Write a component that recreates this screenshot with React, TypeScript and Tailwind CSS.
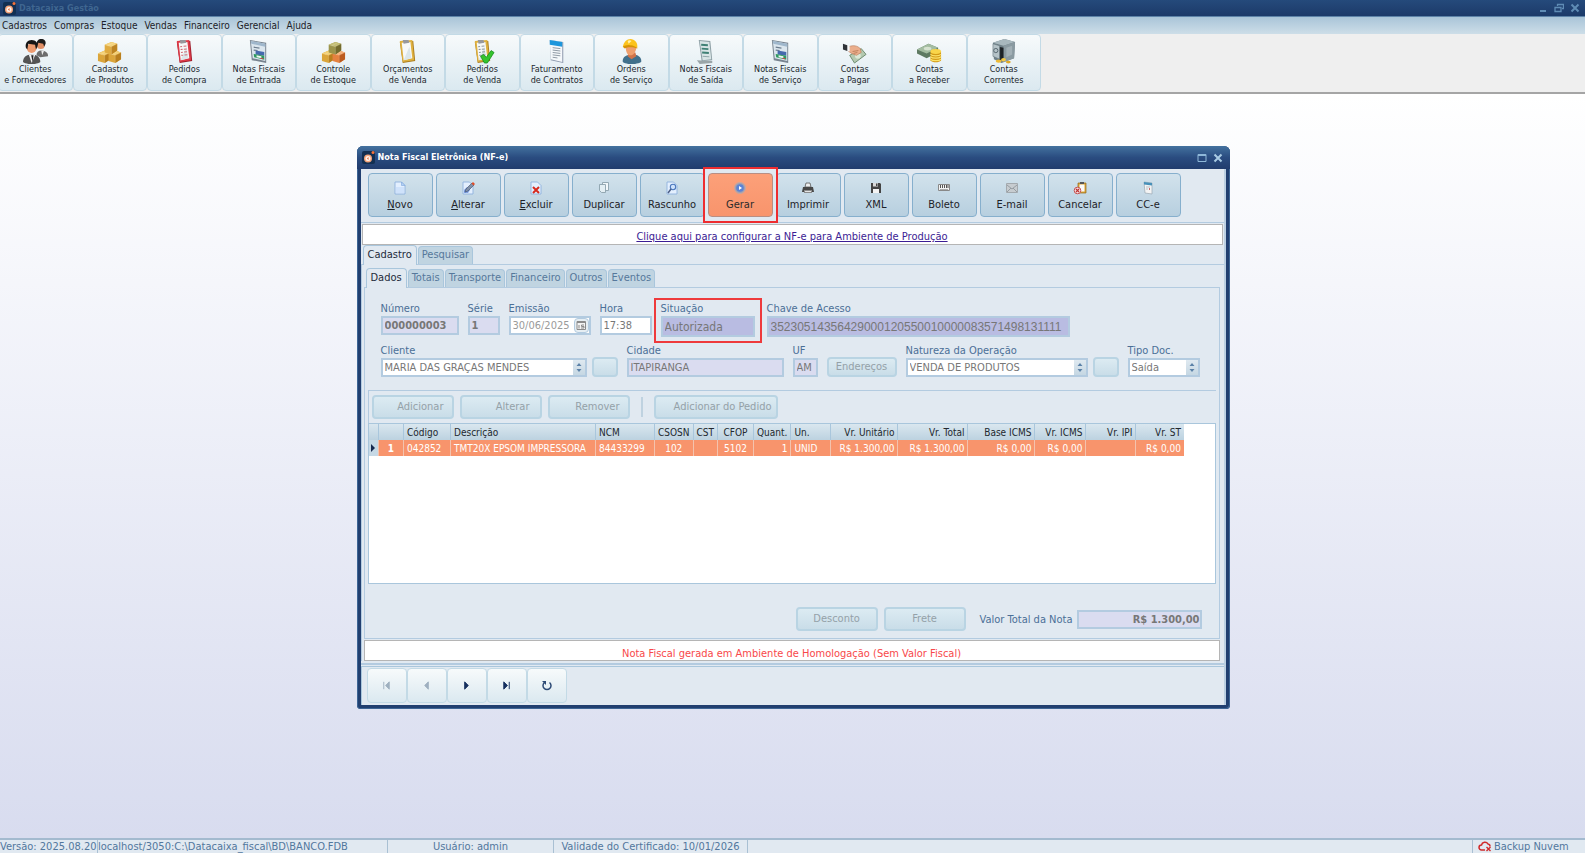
import React from "react";

const FONT = "font-['DejaVu_Sans_Condensed','DejaVu_Sans',sans-serif]";

/* ---------- main toolbar icons ---------- */

function Svg26({ children }: { children: React.ReactNode }) {
  return (
    <svg width="25" height="25" viewBox="0 0 26 26" aria-hidden="true">
      {children}
    </svg>
  );
}

function PeopleIcon() {
  return (
    <Svg26>
      <path d="M14 17c0-3 2-5 5-5s7 2 7 5v1l-8 1z" fill="#6d6d6d" />
      <path d="M19 12l1 5 2-5z" fill="#eee" />
      <circle cx="18.500" cy="6.500" r="4" fill="#e08f66" />
      <path d="M14 6c0-4 2-6 5-6 3 0 5 2 4.500 5L22 8l-1-3-5-1-1 3z" fill="#1d1d1d" />
      <path d="M0 24c0-5 3-8 9-8s9 3 9 8c-4 3-14 3-18 0z" fill="#555" />
      <path d="M6 16l3 9 4-9z" fill="#f4f4f4" />
      <path d="M8.500 17l1.500 7 1-7z" fill="#222" />
      <circle cx="9" cy="9.500" r="5" fill="#ec9b70" />
      <path d="M3 9c-1-5 2-8 6-8s7 3 6 7l-1.500 3-1-5-7-1L4.500 11z" fill="#161616" />
    </Svg26>
  );
}

function Box({ x, y, top, left, right }: { x: number; y: number; top: string; left: string; right: string }) {
  return (
    <g transform={`translate(${x} ${y})`}>
      <path d="M0 3l7-3 6 2v7l-6 4-7-2z" fill={left} />
      <path d="M0 3l7-3 6 2-6 3z" fill={top} />
      <path d="M7 5l6-3v7l-6 4z" fill={right} />
      <path d="M3 4l6-3M0 3l7 2v8M7 5l6-3" stroke="#fff3" fill="none" strokeWidth="0.8" />
    </g>
  );
}

function BoxesIcon({ mixed }: { mixed?: boolean }) {
  return (
    <Svg26>
      <Box x={1} y={12} top="#f3cf73" left="#dba53a" right="#b97f1d" />
      <Box
        x={12}
        y={12}
        top={mixed ? "#f5b07a" : "#f3cf73"}
        left={mixed ? "#e4813f" : "#dba53a"}
        right={mixed ? "#bc5b1e" : "#b97f1d"}
      />
      <Box
        x={8}
        y={3}
        top={mixed ? "#c3bd73" : "#f5d47c"}
        left={mixed ? "#9c944a" : "#e0ab40"}
        right={mixed ? "#736b2c" : "#bd8422"}
      />
    </Svg26>
  );
}

function ClipboardIcon({ frame, edge, lines, check }: { frame: string; edge: string; lines?: string; check?: boolean }) {
  return (
    <Svg26>
      <path d="M5 3l14-1 2 21-13 2z" fill={edge} />
      <path d="M5 2l13-1 2 21-12 2z" fill={frame} />
      <path d="M7 4l9-1 2 17-9 2z" fill="#f6f8f8" />
      <path d="M15 8l2 12-8 2z" fill="#dbe6ea" />
      <path d="M8 1h6l1 3-6 1z" fill="#98989c" />
      {lines && (
        <g stroke={lines} strokeWidth="1.100" fill="none">
          <path d="M8.500 8l2-.2M12 7.600l3-.3M9 11l2-.2M12.300 10.600l3-.3M9.300 14l2-.2M12.600 13.600l3-.3M9.600 17l2-.2M13 16.600l3-.3" />
        </g>
      )}
      {check && <path d="M11 18l3-2 3 3 5-7 3 2-7 11h-3z" fill="#35c42e" stroke="#16891a" strokeWidth="0.8" />}
    </Svg26>
  );
}

function InvoiceIcon() {
  return (
    <Svg26>
      <path d="M4 1l17 3v21L6 22z" fill="#77838f" />
      <path d="M5 2l15 3v18L7 20z" fill="#dbe6ee" />
      <path d="M5 2l15 3v3L5.500 5z" fill="#9fb7cc" />
      <path d="M8 8.500l6 1M8 11.500l4 .500" stroke="#6b7c8d" strokeWidth="1.200" />
      <path d="M10 12l9 1.500v4l-9-1.500z" fill="#4569ad" />
      <path d="M8 15.500l11 2v4L8.500 19z" fill="#2f9960" />
      <path d="M11 17l5 1v2l-5-1z" fill="#eef5f0" />
      <path d="M15 19.500l3 .500v1l-3-.500z" fill="#cc4444" />
    </Svg26>
  );
}

function ContractIcon() {
  return (
    <Svg26>
      <path d="M6 1l14 2v22L7 22z" fill="#8c99ad" />
      <path d="M6 1l13 2v21L7 21z" fill="#f5f8fb" />
      <path d="M6 1l13 2v5L6 6z" fill="#1d96dc" />
      <path d="M9 9l8 1M9 11.500l8 1M9 14l8 1M9 16.500l8 1M9 19l5 .7" stroke="#8d97a2" strokeWidth="1" />
    </Svg26>
  );
}

function WorkerIcon() {
  return (
    <Svg26>
      <path d="M4 24c-1-5 3-8 10-8s10 4 9 8c-5 3-15 3-19 0z" fill="#41708c" />
      <path d="M10 14h7l1 4-5 3-4-3z" fill="#d1744a" />
      <path d="M7 8c0 6 2 9 5 9s6-4 6-9z" fill="#ef9f6d" />
      <path d="M4 8c1-5 4-8 8-8s8 4 7 9l-7-2-6 2z" fill="#fbc31d" />
      <path d="M4 8c3-2 8-3 15 1v1c-5-2-10-2-13 0z" fill="#d79306" />
      <path d="M9 2c1-1 3-1 4 0l-3 3z" fill="#fff0a8" />
    </Svg26>
  );
}

function ReceiptIcon() {
  return (
    <Svg26>
      <path d="M4 22l16 1v2l-13 1z" fill="#9aa5a8" />
      <path d="M6 1l12 1 2 20-11 1z" fill="#8b9da3" />
      <path d="M7 2l10 1 2 18-9 1z" fill="#d8e5e6" />
      <path d="M8.500 6l7 .5M9 10l7 .5M9.500 14l7 .5" stroke="#3f8075" strokeWidth="2" />
      <path d="M10 18l7 .5" stroke="#8fa5a8" strokeWidth="1" />
    </Svg26>
  );
}

function PayIcon() {
  return (
    <Svg26>
      <path d="M8 17l12-7 5 6-12 9z" fill="#b4c9b0" stroke="#6d8b70" />
      <circle cx="16.500" cy="17.500" r="3" fill="#dce8d6" />
      <path d="M7 8c5-2 9-1 12 2l1 4-5 3-5-2-3-2z" fill="#ebae8c" stroke="#b27350" strokeWidth="0.6" />
      <path d="M11 13l6-1M12 15l4-1" stroke="#b27350" strokeWidth="0.8" />
      <path d="M5 6.500l3 1v5.500l-3-1z" fill="#f7f7f7" />
      <path d="M1 5l4.500 1.500v6L1 11z" fill="#2f3338" />
    </Svg26>
  );
}

function ReceiveIcon() {
  return (
    <Svg26>
      <path d="M0 11l12-6 10 4v5l-12 6-10-5z" fill="#5e7a62" />
      <path d="M0 11l12-6 10 4-12 6z" fill="#a3bca0" />
      <ellipse cx="11" cy="10" rx="4" ry="2" fill="#d5e2cf" />
      <path d="M14 13h11v9c-2 3-9 3-11 0z" fill="#d39a16" />
      <path d="M14 16c2 2 9 2 11 0M14 18.500c2 2 9 2 11 0M14 21c2 2 9 2 11 0" stroke="#fbe26b" fill="none" strokeWidth="1.300" />
      <ellipse cx="19.500" cy="13" rx="5.500" ry="2.500" fill="#f9d54a" />
    </Svg26>
  );
}

function SafeIcon() {
  return (
    <Svg26>
      <path d="M2 4l12-4 11 3-1 17-13 5-8-4z" fill="#6f8088" />
      <path d="M2 4l12-4 11 3-12 4z" fill="#a8b8be" />
      <path d="M13 7l12-4-1 17-11 4z" fill="#8a9aa1" />
      <path d="M16 9l6-2v9l-6 3z" fill="#a2b0b6" />
      <path d="M8 8l5 1v14l-5-2z" fill="#1d2226" />
      <path d="M2 5l7 2v14l-7-3z" fill="#b5c3c8" stroke="#66767e" strokeWidth="0.6" />
      <circle cx="5" cy="12" r="2.200" fill="none" stroke="#56666e" />
      <ellipse cx="8" cy="23" rx="3" ry="1.800" fill="#edba35" />
      <ellipse cx="13" cy="21.500" rx="2.500" ry="1.800" fill="#f4c944" />
      <ellipse cx="18" cy="24" rx="2.500" ry="1.500" fill="#e0a824" />
    </Svg26>
  );
}

/* ---------- window toolbar icons ---------- */

function Svg14({ children }: { children: React.ReactNode }) {
  return (
    <svg width="14" height="14" viewBox="0 0 14 14" aria-hidden="true">
      {children}
    </svg>
  );
}

const Page = () => <path d="M2 1h6.500L12 4.500V13H2z" fill="#e3effe" stroke="#8fb1de" strokeWidth="0.900" />;

const NewIcon = () => (
  <Svg14>
    <Page />
    <path d="M3 6l8 0v6H3z" fill="#cfe2fb" />
    <path d="M8.500 1v3.500H12z" fill="#b5d1f5" stroke="#7ea6dc" strokeWidth="0.600" />
  </Svg14>
);
const EditIcon = () => (
  <Svg14>
    <Page />
    <path d="M3 9l3-3 3 3-2 3H3z" fill="#7e9fe0" />
    <path d="M4 11l1-3 6-6 2 2-6 6z" fill="#8292a9" stroke="#3c4966" strokeWidth="0.600" />
    <path d="M10.500 2.500L12 1l2 2-1.500 1.500z" fill="#e14b26" />
  </Svg14>
);
const DeleteIcon = () => (
  <Svg14>
    <Page />
    <path d="M4 6l6 6M10 6l-6 6" stroke="#d72a1e" strokeWidth="2" />
  </Svg14>
);
const CopyIcon = () => (
  <Svg14>
    <path d="M5.500 1.500h6v8h-6z" fill="#f1f7fa" stroke="#8ba0ab" strokeWidth="0.900" />
    <path d="M2.500 3.500h6v8H4.500l-2-2z" fill="#e3eef3" stroke="#8ba0ab" strokeWidth="0.900" />
  </Svg14>
);
const DraftIcon = () => (
  <Svg14>
    <Page />
    <circle cx="8" cy="6" r="2.700" fill="#cfe2fb" stroke="#4c78bd" strokeWidth="1.100" />
    <path d="M6 8l-3 4" stroke="#4c5f87" strokeWidth="1.500" />
  </Svg14>
);
const RunIcon = () => (
  <Svg14>
    <circle cx="7" cy="7" r="5.500" fill="#9b9fb3" stroke="#c9a7a0" />
    <circle cx="7" cy="7" r="3.800" fill="#5b83d6" />
    <path d="M6 5l3 2-3 2z" fill="#fff" />
  </Svg14>
);
const PrintIcon = () => (
  <Svg14>
    <path d="M4 6l1-4h4l1 4z" fill="#efefef" stroke="#555" strokeWidth="0.800" />
    <path d="M2 6h10l1 5H1z" fill="#474747" />
    <path d="M3 9h8v3H3z" fill="#8d8d8d" />
    <path d="M4 10h6v1H4z" fill="#e4e4e4" />
  </Svg14>
);
const SaveIcon = () => (
  <Svg14>
    <path d="M2 2h9l1 1v9H2z" fill="#444" />
    <path d="M4 2h5v3.500H4z" fill="#d9d9d9" />
    <path d="M7 2.500h1.500V5H7z" fill="#444" />
    <path d="M4 8h6v4H4z" fill="#f3f3f3" />
  </Svg14>
);
const BarcodeIcon = () => (
  <Svg14>
    <path d="M1.500 3.500h11v6h-11z" fill="#f3f3f3" stroke="#888" />
    <path d="M3.500 4v3M5.500 4v3M7.500 4v3M9.500 4v3M11 4v3" stroke="#555" strokeWidth="1" />
    <path d="M3 8.500h8" stroke="#aaa" />
  </Svg14>
);
const MailIcon = () => (
  <Svg14>
    <path d="M1.500 2.500h11v9h-11z" fill="#c7ccd0" stroke="#a3a9ae" />
    <path d="M2 4l5 4 5-4M2 11l4-4M12 11L8 7" fill="none" stroke="#90979d" strokeWidth="0.900" />
  </Svg14>
);
const CancelIcon = () => (
  <Svg14>
    <path d="M5 2h8v10H5z" fill="#d9a437" stroke="#94681b" strokeWidth="0.700" />
    <path d="M6.500 3.500h5v7h-5z" fill="#fafafa" />
    <path d="M7 1h4v2H7z" fill="#555" />
    <circle cx="4.500" cy="9.500" r="3.300" fill="#f5dada" stroke="#c65353" />
    <path d="M3 8l3 3M6 8l-3 3" stroke="#b33" strokeWidth="1.100" />
  </Svg14>
);
const LetterIcon = () => (
  <Svg14>
    <path d="M3 1l8 1v11l-7-1z" fill="#f4f4f4" stroke="#9aa7b1" strokeWidth="0.700" />
    <path d="M3 1l8 1v2.500L3 3.500z" fill="#4790b9" />
    <path d="M5 6h4M5 8h2" stroke="#b9c0c6" />
    <path d="M8 7h1v2H8z" fill="#cc6b6b" />
  </Svg14>
);

function AppLogo() {
  return (
    <svg width="13" height="13" viewBox="0 0 13 13" aria-hidden="true">
      <rect width="13" height="13" rx="2" fill="#122f52" />
      <circle cx="6" cy="7.500" r="4" fill="#f4a47c" />
      <circle cx="6" cy="7.500" r="2.500" fill="#fff3ec" />
      <path d="M6.500 6L5 7.500 6.500 9z" fill="#e8622b" />
      <circle cx="11" cy="1.500" r="1.500" fill="#f4723a" />
    </svg>
  );
}

const MENU = ["Cadastros", "Compras", "Estoque", "Vendas", "Financeiro", "Gerencial", "Ajuda"];

const SHORTCUTS: { a: string; b: string; icon: React.ReactNode }[] = [
  { a: "Clientes", b: "e Fornecedores", icon: <PeopleIcon /> },
  { a: "Cadastro", b: "de Produtos", icon: <BoxesIcon /> },
  { a: "Pedidos", b: "de Compra", icon: <ClipboardIcon frame="#dd3b48" edge="#9e1c2a" lines="#d06a72" /> },
  { a: "Notas Fiscais", b: "de Entrada", icon: <InvoiceIcon /> },
  { a: "Controle", b: "de Estoque", icon: <BoxesIcon mixed /> },
  { a: "Orçamentos", b: "de Venda", icon: <ClipboardIcon frame="#dfb13f" edge="#a87a1d" /> },
  { a: "Pedidos", b: "de Venda", icon: <ClipboardIcon frame="#dfb13f" edge="#a87a1d" lines="#8d979c" check /> },
  { a: "Faturamento", b: "de Contratos", icon: <ContractIcon /> },
  { a: "Ordens", b: "de Serviço", icon: <WorkerIcon /> },
  { a: "Notas Fiscais", b: "de Saída", icon: <ReceiptIcon /> },
  { a: "Notas Fiscais", b: "de Serviço", icon: <InvoiceIcon /> },
  { a: "Contas", b: "a Pagar", icon: <PayIcon /> },
  { a: "Contas", b: "a Receber", icon: <ReceiveIcon /> },
  { a: "Contas", b: "Correntes", icon: <SafeIcon /> },
];

const ACTIONS: { label: string; key?: boolean; icon: React.ReactNode; hot?: boolean }[] = [
  { label: "Novo", key: true, icon: <NewIcon /> },
  { label: "Alterar", key: true, icon: <EditIcon /> },
  { label: "Excluir", key: true, icon: <DeleteIcon /> },
  { label: "Duplicar", icon: <CopyIcon /> },
  { label: "Rascunho", icon: <DraftIcon /> },
  { label: "Gerar", icon: <RunIcon />, hot: true },
  { label: "Imprimir", icon: <PrintIcon /> },
  { label: "XML", icon: <SaveIcon /> },
  { label: "Boleto", icon: <BarcodeIcon /> },
  { label: "E-mail", icon: <MailIcon /> },
  { label: "Cancelar", icon: <CancelIcon /> },
  { label: "CC-e", icon: <LetterIcon /> },
];

const COLUMNS: { head: string; value: string; width: string; align: string }[] = [
  { head: "", value: "1", width: "w-[25px]", align: "text-center font-bold" },
  { head: "Código", value: "042852", width: "w-[47px]", align: "text-left" },
  { head: "Descrição", value: "TMT20X EPSOM IMPRESSORA", width: "w-[145px]", align: "text-left" },
  { head: "NCM", value: "84433299", width: "w-[59px]", align: "text-left" },
  { head: "CSOSN", value: "102", width: "w-[38px]", align: "text-center" },
  { head: "CST", value: "", width: "w-[22px]", align: "text-center" },
  { head: "CFOP", value: "5102", width: "w-[36px]", align: "text-center" },
  { head: "Quant.", value: "1", width: "w-[37px]", align: "text-right" },
  { head: "Un.", value: "UNID", width: "w-[40px]", align: "text-left" },
  { head: "Vr. Unitário", value: "R$ 1.300,00", width: "w-[67px]", align: "text-right" },
  { head: "Vr. Total", value: "R$ 1.300,00", width: "w-[70px]", align: "text-right" },
  { head: "Base ICMS", value: "R$ 0,00", width: "w-[67px]", align: "text-right" },
  { head: "Vr. ICMS", value: "R$ 0,00", width: "w-[51px]", align: "text-right" },
  { head: "Vr. IPI", value: "", width: "w-[50px]", align: "text-right" },
  { head: "Vr. ST", value: "R$ 0,00", width: "w-[48px]", align: "text-right" },
];

/* ---------- form parts ---------- */

const LABEL = "block whitespace-nowrap text-[11px] leading-[15px] text-[#4b6f97]";
const BOX = "block w-full border-2 border-[#b3cbe0] px-0.5 text-[#777] outline-none";
const SOFT_BUTTON =
  "rounded border-2 border-[#b9d4e3] bg-linear-to-b from-[#dcebf2] to-[#c9dde8] text-[11px] text-[#94a1a8]";

function Field(props: { id: string; label: string; value: string; width: string; look: string }) {
  return (
    <div className={props.width}>
      <label htmlFor={props.id} className={LABEL}>
        {props.label}
      </label>
      <input id={props.id} readOnly defaultValue={props.value} className={`${BOX} ${props.look}`} />
    </div>
  );
}

function Choice(props: { id: string; label: string; value: string; width: string; tone: string }) {
  return (
    <div className={props.width}>
      <label htmlFor={props.id} className={LABEL}>
        {props.label}
      </label>
      <div className="relative">
        <select id={props.id} className={`${BOX} h-[19px] appearance-none bg-white text-[11px] ${props.tone}`}>
          <option>{props.value}</option>
        </select>
        <span className="pointer-events-none absolute inset-y-0.5 right-0.5 flex w-3 items-center justify-center bg-linear-to-b from-[#dfe9f0] to-[#c5d7e3]">
          <svg width="6" height="9" viewBox="0 0 6 9" aria-hidden="true">
            <path d="M3 0l2.500 3h-5zM3 9l2.500-3h-5z" fill="#5c82a8" />
          </svg>
        </span>
      </div>
    </div>
  );
}

const LILAC = "h-[19px] bg-[#dadcf0] text-[11px]";
const LILAC_DARK = "h-[21px] bg-[#b9bce2] text-[12px]";

function Tabs({ items, pad }: { items: string[]; pad: string }) {
  return (
    <div role="tablist" className={`flex items-end gap-px ${pad}`}>
      {items.map((t, i) => (
        <button
          key={t}
          role="tab"
          type="button"
          aria-selected={i === 0}
          className={
            i === 0
              ? "relative z-10 -mb-px h-[20px] rounded-t border border-b-0 border-[#a9c6dc] bg-[#e1e9f1] px-1 text-[11px] text-[#1d2b3a]"
              : "h-[18px] rounded-t border border-b-0 border-[#a9c6dc] bg-[#c0d4e1] px-[3px] text-[11px] text-[#56789b]"
          }
        >
          {t}
        </button>
      ))}
    </div>
  );
}

const NAV_BUTTON =
  "flex h-[35px] w-10 items-center justify-center rounded border border-[#c3dae6] bg-linear-to-b from-[#f7fafb] to-[#dbe9f0]";

function NfeWindow() {
  return (
    <section
      aria-label="Nota Fiscal Eletrônica"
      className="mx-auto w-[873px] max-w-full rounded-t-md rounded-b-sm bg-[#213f70] px-1 pb-1 shadow-[inset_1px_0_0_#3d6595,inset_-1px_-1px_0_#3d6595]"
    >
      <header className="-mx-1 flex h-[23px] items-center gap-[3px] rounded-t-md bg-linear-to-b from-[#44729f] via-[#2a4c80] to-[#213c6d] px-[5px] text-white">
        <AppLogo />
        <h1 className="text-[9px] font-bold">Nota Fiscal Eletrônica (NF-e)</h1>
        <div className="ml-auto flex items-center gap-1.5 text-[#8fb8d8]">
          <button type="button" aria-label="Maximizar">
            <svg width="10" height="10" viewBox="0 0 10 10">
              <path d="M1 1.500h8v7H1z M1 2.500h8" fill="none" stroke="currentColor" />
            </svg>
          </button>
          <button type="button" aria-label="Fechar" className="pr-0.5">
            <svg width="10" height="10" viewBox="0 0 10 10">
              <path d="M1.500 1.500l7 7M8.500 1.500l-7 7" stroke="#a9cbe4" strokeWidth="2" />
            </svg>
          </button>
        </div>
      </header>

      <div className="border-r-2 border-[#bcd0e2] bg-[#e1e9f1]">
        <div className="flex h-[54px] items-start gap-[3px] border-b border-[#b3cbe0] pt-1 pl-[7px]">
          {ACTIONS.map((a) => (
            <div key={a.label} className="relative w-[65px]">
              <button
                type="button"
                className={
                  a.hot
                    ? "flex h-[44px] w-full flex-col items-center justify-center rounded border border-[#b98e83] bg-linear-to-b from-[#fca079] to-[#f8946c] pt-[3px] text-[11px] leading-4 text-[#2b2b2b]"
                    : "flex h-[44px] w-full flex-col items-center justify-center rounded border border-[#86afcd] bg-linear-to-b from-[#d2e2ec] to-[#b7cfdf] pt-[3px] text-[11px] leading-4 text-[#1d2228]"
                }
              >
                <span className="mb-0.5">{a.icon}</span>
                {a.key ? (
                  <span>
                    <u>{a.label[0]}</u>
                    {a.label.slice(1)}
                  </span>
                ) : (
                  <span>{a.label}</span>
                )}
              </button>
              {a.hot && (
                <span className="pointer-events-none absolute -inset-x-[5px] -inset-y-[6px] z-10 border-2 border-[#ee2d30]" />
              )}
            </div>
          ))}
        </div>

        <div className="mx-px mt-px flex h-[21px] items-end justify-center border border-[#b5b5b5] bg-white">
          <a href="#producao" className="text-[11px] leading-[14px] text-[#3c1d94] underline">
            Clique aqui para configurar a NF-e para Ambiente de Produção
          </a>
        </div>

        <Tabs items={["Cadastro", "Pesquisar"]} pad="pl-0.5" />
        <div className="border-t border-l border-[#b3cbe0] pt-[3px] pr-1 pl-[2px]">
          <Tabs items={["Dados", "Totais", "Transporte", "Financeiro", "Outros", "Eventos"]} pad="pl-0.5" />
          <div className="border border-[#b3cbe0] px-[3px]">
            <div className="flex items-start gap-[9px] pt-[13px] pl-[13px]">
              <Field id="numero" label="Número" value="000000003" width="w-[78px]" look={`${LILAC} font-bold`} />
              <Field id="serie" label="Série" value="1" width="w-8" look={`${LILAC} font-bold`} />
              <div className="w-[82px]">
                <label htmlFor="emissao" className={LABEL}>
                  Emissão
                </label>
                <div className="relative">
                  <input
                    id="emissao"
                    readOnly
                    defaultValue="30/06/2025"
                    className="block h-[19px] w-full border-2 border-[#b3cbe0] bg-white px-0.5 text-[11px] text-[#9a9a9a] outline-none"
                  />
                  <button
                    type="button"
                    aria-label="Abrir calendário"
                    className="absolute inset-y-0.5 right-0.5 flex w-[15px] items-center justify-center rounded border border-[#b3cbe0] bg-[#e6eef3]"
                  >
                    <svg width="11" height="11" viewBox="0 0 11 11" aria-hidden="true">
                      <path d="M1 1.500h8.500v8H1z" fill="#f4f4f4" stroke="#8b8b8b" />
                      <path d="M1 2.500h9M3 5v3.500M8 5H5.500v1.500H8v1.500H5" stroke="#8b8b8b" fill="none" />
                    </svg>
                  </button>
                </div>
              </div>
              <Field id="hora" label="Hora" value="17:38" width="w-[52px]" look="h-[19px] bg-white text-[11px]" />
              <div className="relative">
                <Field id="situacao" label="Situação" value="Autorizada" width="w-[94px]" look={LILAC_DARK} />
                <span className="pointer-events-none absolute -inset-x-[7px] -top-[3px] -bottom-[6px] border-2 border-[#ee3a3c]" />
              </div>
              <div className="pl-[3px]">
                <Field
                  id="chave"
                  label="Chave de Acesso"
                  value="35230514356429000120550010000083571498131111"
                  width="w-[303px]"
                  look={`${LILAC_DARK} font-['Liberation_Sans',sans-serif]`}
                />
              </div>
            </div>

            <div className="flex items-end gap-[9px] pt-1.5 pl-[13px]">
              <div className="flex items-end gap-[5px]">
                <Choice id="cliente" label="Cliente" value="MARIA DAS GRAÇAS MENDES" width="w-[206px]" tone="text-[#777]" />
                <button type="button" aria-label="Buscar cliente" className={`${SOFT_BUTTON} h-5 w-[26px]`} />
              </div>
              <Field id="cidade" label="Cidade" value="ITAPIRANGA" width="w-[157px]" look={LILAC} />
              <Field id="uf" label="UF" value="AM" width="w-[25px]" look={LILAC} />
              <button type="button" className={`${SOFT_BUTTON} h-5 w-[70px] leading-3`}>
                Endereços
              </button>
              <div className="flex items-end gap-[5px]">
                <Choice
                  id="natureza"
                  label="Natureza da Operação"
                  value="VENDA DE PRODUTOS"
                  width="w-[182px]"
                  tone="text-[#777]"
                />
                <button type="button" aria-label="Buscar natureza" className={`${SOFT_BUTTON} h-5 w-[26px]`} />
              </div>
              <Choice id="tipo" label="Tipo Doc." value="Saída" width="w-[72px]" tone="text-[#9a9a9a]" />
            </div>

            <div className="mt-[13px] flex items-center gap-1.5 border-t border-l border-[#b3cbe0] py-1 pl-[3px]">
              <button type="button" className={`${SOFT_BUTTON} h-6 w-[82px] pr-2 text-right`}>
                Adicionar
              </button>
              <button type="button" className={`${SOFT_BUTTON} h-6 w-[82px] pr-2.5 text-right`}>
                Alterar
              </button>
              <button type="button" className={`${SOFT_BUTTON} h-6 w-[82px] pr-2 text-right`}>
                Remover
              </button>
              <span className="mx-[5px] h-5 w-0.5 bg-[#bfd2e0]" />
              <button type="button" className={`${SOFT_BUTTON} h-6 w-[124px] pr-1 text-right`}>
                Adicionar do Pedido
              </button>
            </div>

            <div className="h-[161px] overflow-hidden border border-[#a9c6dc] bg-white">
              <table className="table-fixed border-collapse text-[10px] leading-[15px] whitespace-nowrap">
                <thead>
                  <tr className="h-4 bg-linear-to-b from-[#dae7ef] to-[#bcd2e0] text-[#22282e]">
                    <th className="w-2.5 p-0" />
                    {COLUMNS.map((c, i) => (
                      <th key={i} className={`${c.width} border-l border-[#a9c6dc] px-[3px] py-0 font-normal ${c.align}`}>
                        {c.head}
                      </th>
                    ))}
                  </tr>
                </thead>
                <tbody>
                  <tr className="h-4 bg-[#f8946c] text-white">
                    <td className="bg-[#c5d8e5] p-0">
                      <svg width="6" height="8" viewBox="0 0 6 8" className="mx-auto" aria-hidden="true">
                        <path d="M1 0l4 4-4 4z" fill="#16294f" />
                      </svg>
                    </td>
                    {COLUMNS.map((c, i) => (
                      <td key={i} className={`border-l border-[#f3c3ae] px-[3px] py-0 ${c.align}`}>
                        {c.value}
                      </td>
                    ))}
                  </tr>
                </tbody>
              </table>
            </div>

            <div className="flex h-[54px] items-center justify-end gap-1.5 pt-4 pr-3.5">
              <button type="button" className={`${SOFT_BUTTON} h-6 w-[82px]`}>
                Desconto
              </button>
              <button type="button" className={`${SOFT_BUTTON} h-6 w-[82px]`}>
                Frete
              </button>
              <div className="flex items-center gap-1 pl-2">
                <label htmlFor="total" className={LABEL}>
                  Valor Total da Nota
                </label>
                <input
                  id="total"
                  readOnly
                  defaultValue="R$ 1.300,00"
                  className="h-[19px] w-[125px] border-2 border-[#b3cbe0] bg-[#dadcf0] text-right text-[11px] font-bold text-[#777] outline-none"
                />
              </div>
            </div>
          </div>
          <p className="mt-px mb-[2px] flex h-[21px] items-end justify-center border border-[#b5b5b5] bg-white text-[11px] leading-[13px] text-[#f8484a]">
            Nota Fiscal gerada em Ambiente de Homologação (Sem Valor Fiscal)
          </p>
        </div>

        <nav className="border-t-2 border-[#b3cbe0] pt-px">
          <div className="flex border-t border-l border-[#a9c6dc] pt-px pb-0.5 pl-[5px]">
            {[
              { n: "Primeiro", d: "M3 2v8M9 2v8L5 6z", on: false },
              { n: "Anterior", d: "M8 2v8L4 6z", on: false },
              { n: "Próximo", d: "M4 2v8l4-4z", on: true },
              { n: "Último", d: "M9 2v8M3 2v8l4-4z", on: true },
            ].map((b) => (
              <button key={b.n} type="button" aria-label={b.n} className={NAV_BUTTON}>
                <svg width="11" height="11" viewBox="0 0 12 12">
                  <path d={b.d} fill={b.on ? "#16305f" : "#9fb0c0"} stroke={b.on ? "#16305f" : "#9fb0c0"} />
                </svg>
              </button>
            ))}
            <button type="button" aria-label="Atualizar" className={NAV_BUTTON}>
              <svg width="12" height="12" viewBox="0 0 12 12">
                <path d="M8.500 2.500a4 4 0 1 1-5 0" fill="none" stroke="#2d4a75" strokeWidth="1.500" />
                <path d="M1 1h4v4z" fill="#2d4a75" />
              </svg>
            </button>
          </div>
        </nav>
      </div>
    </section>
  );
}

export default function App() {
  return (
    <div className={`flex h-screen flex-col overflow-hidden ${FONT}`}>
      <header className="flex h-4 shrink-0 items-center gap-[3px] bg-linear-to-b from-[#254a7b] to-[#1c3a69] px-[3px] text-[#3f6690]">
        <AppLogo />
        <span className="text-[9px] leading-4 font-bold">Datacaixa Gestão</span>
        <div className="ml-auto flex items-center gap-1.5 pr-0.5 text-[#5f8cb5]">
          <button type="button" aria-label="Minimizar">
            <svg width="10" height="10" viewBox="0 0 10 10">
              <path d="M2 8h6" stroke="currentColor" strokeWidth="2" />
            </svg>
          </button>
          <button type="button" aria-label="Restaurar">
            <svg width="10" height="10" viewBox="0 0 10 10">
              <path d="M3.500 3V1.500h6v4H8M1 4.500h6v4H1z" fill="none" stroke="currentColor" strokeWidth="1.300" />
            </svg>
          </button>
          <button type="button" aria-label="Fechar">
            <svg width="10" height="10" viewBox="0 0 10 10">
              <path d="M1.500 1.500l7 7M8.500 1.500l-7 7" stroke="currentColor" strokeWidth="2" />
            </svg>
          </button>
        </div>
      </header>

      <nav className="flex h-[18px] shrink-0 items-center gap-[7px] border-t border-[#5d83a8] bg-linear-to-b from-[#a9c4d8] to-[#cddee8] px-0.5 text-[10px] text-[#1c2229]">
        {MENU.map((m) => (
          <button key={m} type="button" className="leading-4">
            {m}
          </button>
        ))}
      </nav>

      <div className="shrink-0 border-b-2 border-[#a5a5a5] bg-[#efefef] pb-px">
        <div className="-ml-0.5 grid w-[1043px] grid-cols-14">
          {SHORTCUTS.map((s) => (
            <button
              key={`${s.a} ${s.b}`}
              type="button"
              className="flex h-[57px] flex-col items-center rounded-sm border border-[#c3dae6] bg-linear-to-b from-[#f7fafb] to-[#dbe9f0] pt-1 text-[9px] leading-[11px] whitespace-nowrap text-[#22282e]"
            >
              {s.icon}
              <span>{s.a}</span>
              <span>{s.b}</span>
            </button>
          ))}
        </div>
      </div>

      <main className="min-h-0 flex-1 overflow-hidden bg-linear-to-b from-white to-[#d8dcef] pt-[52px] pl-px">
        <NfeWindow />
      </main>

      <footer className="flex h-[15px] shrink-0 border-t-2 border-[#a3bacf] bg-[#e1e9f1] text-[11px] leading-[13px] whitespace-nowrap text-[#52779d]">
        <span className="w-[98px] border-r border-[#a9c0d3]">Versão: 2025.08.20</span>
        <span className="w-[290px] border-r border-[#a9c0d3]">localhost/3050:C:\Datacaixa_fiscal\BD\BANCO.FDB</span>
        <span className="w-[166px] border-r border-[#a9c0d3] text-center">Usuário: admin</span>
        <span className="w-[194px] border-r border-[#a9c0d3] text-center">Validade do Certificado: 10/01/2026</span>
        <span className="ml-auto flex w-[113px] items-start gap-[3px] border-l border-[#a9c0d3] pl-[5px]">
          <svg width="13" height="12" viewBox="0 0 13 12" aria-hidden="true">
            <path d="M7 10H3.500a2.500 2.500 0 0 1 0-5A3.500 3.500 0 0 1 10 4a2.500 2.500 0 0 1 2 2.500" fill="none" stroke="#d02b2b" strokeWidth="1.500" />
            <path d="M8.500 7l4 4M12.500 7l-4 4" stroke="#d02b2b" strokeWidth="1.400" />
          </svg>
          Backup Nuvem
        </span>
      </footer>
    </div>
  );
}
